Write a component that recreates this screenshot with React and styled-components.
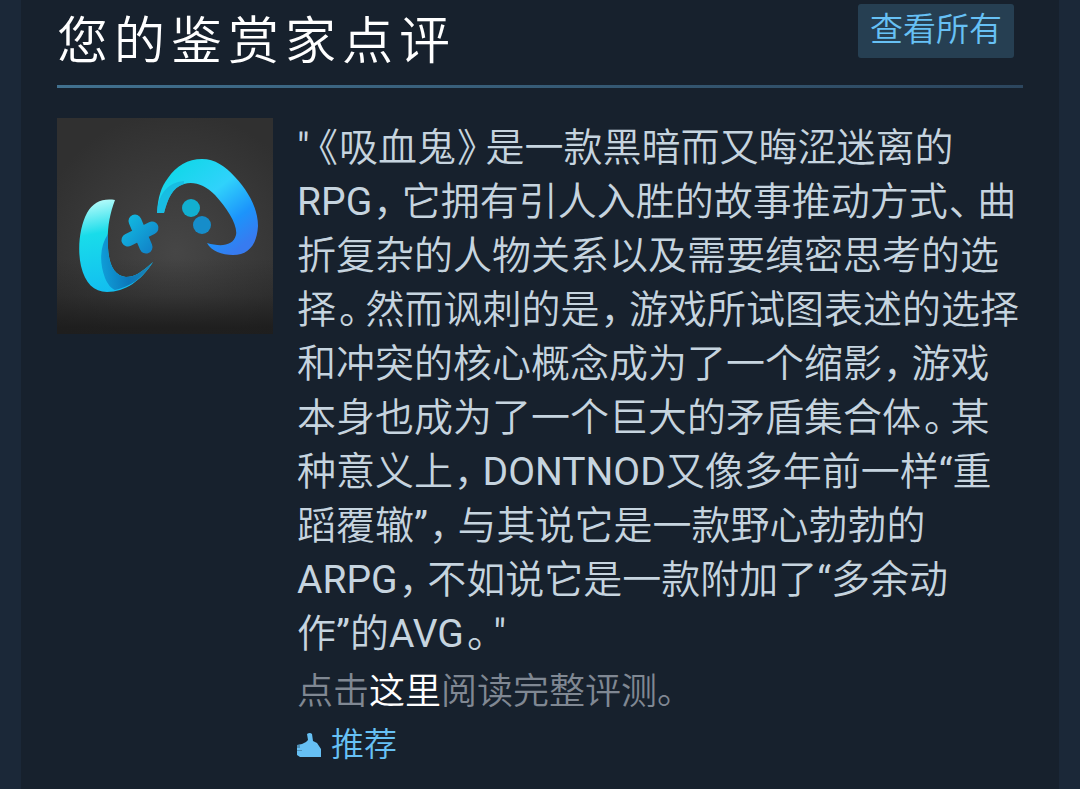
import React from "react";
import styled, { createGlobalStyle } from "styled-components";

const App = () => {
  return (
    <Page>
      <GlobalStyle />
      <Panel>
        <Header>
          <Title>您的鉴赏家点评</Title>
          <ViewAll href="#all">查看所有</ViewAll>
        </Header>
        <Review>
          <CuratorLogo />
          <ReviewBody>
            <Quote>
              {quoteLines.map((line) => (
                <QuoteLine key={line}>{spacePunctuation(line)}</QuoteLine>
              ))}
            </Quote>
            <ReadMore>
              点击<a href="#review">这里</a>阅读完整评测。
            </ReadMore>
            <Verdict>
              <ThumbIcon />
              推荐
            </Verdict>
          </ReviewBody>
        </Review>
      </Panel>
    </Page>
  );
};

export default App;

const quoteLines = [
  '"《吸血鬼》是一款黑暗而又晦涩迷离的',
  "RPG，它拥有引人入胜的故事推动方式、曲",
  "折复杂的人物关系以及需要缜密思考的选",
  "择。然而讽刺的是，游戏所试图表述的选择",
  "和冲突的核心概念成为了一个缩影，游戏",
  "本身也成为了一个巨大的矛盾集合体。某",
  "种意义上，DONTNOD又像多年前一样“重",
  "蹈覆辙”，与其说它是一款野心勃勃的",
  "ARPG，不如说它是一款附加了“多余动",
  '作”的AVG。"',
];

const markPadding = {
  "《": "0 1px 0 9px",
  "》": "0 9px 0 1px",
  "，": "0 9px 0 1px",
  "。": "0 7px 0 3px",
  "、": "0 9px 0 1px",
};

// full width marks are set narrower than the characters round them
const spacePunctuation = (line) =>
  line.split(/([《》，。、])/).map((part, i) =>
    i % 2 ? (
      <Mark key={i} $padding={markPadding[part]}>
        {part}
      </Mark>
    ) : (
      part
    )
  );

const CuratorLogo = () => (
  <Logo viewBox="0 0 216 216" role="img" aria-label="鉴赏家">
    <defs>
      <radialGradient id="back" cx="0.55" cy="0.62" r="0.65">
        <stop offset="0" stopColor="#464646" />
        <stop offset="1" stopColor="#303030" />
      </radialGradient>
      <linearGradient id="floor" x1="0" y1="0" x2="0" y2="1">
        <stop offset="0.65" stopColor="#1c1c1c" stopOpacity="0" />
        <stop offset="0.82" stopColor="#1c1c1c" stopOpacity="0.3" />
        <stop offset="0.97" stopColor="#1c1c1c" stopOpacity="0.9" />
      </linearGradient>
      <linearGradient id="left" x1="0.3" y1="0" x2="0.45" y2="1">
        <stop offset="0" stopColor="#b4fbfa" />
        <stop offset="0.35" stopColor="#19dcea" />
        <stop offset="1" stopColor="#12bdf0" />
      </linearGradient>
      <linearGradient id="leftShade" x1="0" y1="0.6" x2="1" y2="0.5">
        <stop offset="0" stopColor="#109ed8" />
        <stop offset="0.5" stopColor="#0c77bb" />
        <stop offset="1" stopColor="#1c87b4" />
      </linearGradient>
      <linearGradient id="right" x1="0.2" y1="0.1" x2="0.85" y2="0.9">
        <stop offset="0" stopColor="#14d7ea" />
        <stop offset="0.4" stopColor="#30d2fb" />
        <stop offset="0.75" stopColor="#1c94fb" />
        <stop offset="1" stopColor="#377bf0" />
      </linearGradient>
      <linearGradient id="pad" x1="0" y1="0" x2="1" y2="1">
        <stop offset="0" stopColor="#12b5df" />
        <stop offset="1" stopColor="#1186ca" />
      </linearGradient>
    </defs>
    <rect width="216" height="216" fill="url(#back)" />
    <rect width="216" height="216" fill="url(#floor)" />
    <path
      fill="url(#left)"
      d="M58 82C46 80 36 84 30 95C23 108 20 130 24 148C28 165 37 174 50 174C68 174 84 163 96 144C84 155 77 159 69 159C58 158 52 148 51 130C50 112 52 98 58 82Z"
    />
    <path
      fill="url(#leftShade)"
      d="M51 116C43 128 42 144 48 160C51 167 54 170 58 172C73 169 86 160 96 144C84 155 77 159 69 159C58 158 52 148 51 130Z"
    />
    <path
      fill="url(#right)"
      d="M100 95C101 79 104 69 111 60C119 48 131 41 145 41C158 41 168 48 178 59C192 74 201 91 201 108C200 127 191 137 176 137C165 137 154 133 150 125C164 129 176 128 179 117C181 107 170 90 158 77C148 67 137 63 127 66C115 70 111 80 107 95Z"
    />
    <path
      fill="#16b2dc"
      opacity="0.7"
      d="M100 95C101 79 108 65 127 63L127 66C115 70 111 80 107 95Z"
    />
    <path
      stroke="url(#pad)"
      strokeWidth="13"
      strokeLinecap="round"
      fill="none"
      d="M78 103L89 129M71 122L95 110"
    />
    <circle cx="134" cy="90" r="9" fill="#12afd0" />
    <circle cx="145" cy="107" r="9" fill="#168dca" />
  </Logo>
);

const ThumbIcon = () => (
  <Thumb viewBox="0 0 24 24" aria-hidden="true">
    <path
      fill="#66c0f4"
      d="M10 1Q13 -1 15 1L16 8L20 10L24 16V24H3L0 22V12L5 11L9 9L11 7Z"
    />
    <path fill="#17212d" d="M0 12H3V15H0ZM0 17H5V18H0Z" opacity="0.3" />
  </Thumb>
);

const GlobalStyle = createGlobalStyle`
  * {
    box-sizing: border-box;
  }
  body {
    margin: 0;
    background: #1b2838;
    font-family: Roboto, "Noto Sans CJK SC DemiLight", "Noto Sans CJK SC", sans-serif;
  }
`;

const Page = styled.div`
  padding: 0 21px;
  background: #1b2838;
`;
const Panel = styled.main`
  min-height: 100vh;
  padding: 0 36px 16px;
  background: #17212d;
`;
const Header = styled.header`
  display: flex;
  justify-content: space-between;
  align-items: flex-start;
  padding: 4px 9px 0 0;
  height: 88px;
  border-bottom: 3px solid;
  border-image: linear-gradient(to right, #41718f, #2c465e) 1;
`;
const Title = styled.h1`
  margin: 0;
  font-size: 51px;
  font-weight: 300;
  line-height: 76px;
  letter-spacing: 6px;
  color: #fff;
`;
const ViewAll = styled.a`
  padding: 0 12px 2px;
  border-radius: 3px;
  font-size: 33px;
  font-weight: 300;
  line-height: 52px;
  color: #67c1f5;
  background: #263f52;
  text-decoration: none;
`;
const Review = styled.article`
  display: flex;
  align-items: flex-start;
  gap: 24px;
  padding-top: 30px;
`;
const Logo = styled.svg`
  flex: none;
  width: 216px;
  height: 216px;
`;
const ReviewBody = styled.div`
  flex: 1;
  padding-top: 3px;
`;
const Quote = styled.p`
  margin: 0;
  font-size: 39px;
  line-height: 54px;
  color: #c6d4df;
`;
const QuoteLine = styled.span`
  display: block;
  white-space: nowrap;
`;
const Mark = styled.span`
  padding: ${(props) => props.$padding};
  font-feature-settings: "halt";
`;
const ReadMore = styled.p`
  margin: 4px 0 0;
  font-size: 36px;
  font-weight: 300;
  line-height: 54px;
  color: #808893;

  a {
    color: #fff;
    font-weight: 400;
    text-decoration: none;
  }
`;
const Verdict = styled.div`
  display: flex;
  align-items: center;
  gap: 10px;
  font-size: 33px;
  font-weight: 300;
  line-height: 52px;
  color: #67c1f5;
`;
const Thumb = styled.svg`
  width: 24px;
  height: 24px;
`;
